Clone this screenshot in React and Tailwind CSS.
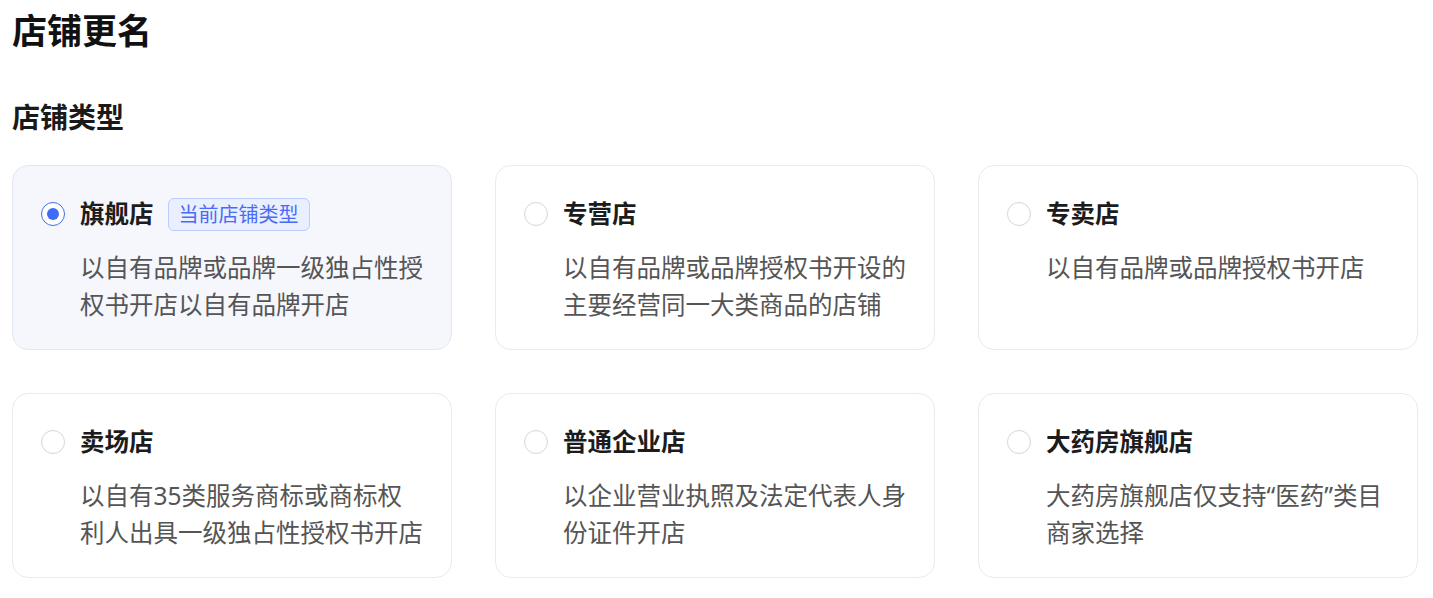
import { useState } from 'react'

const shopTypes = [
  { key: 'flagship', name: '旗舰店', desc: '以自有品牌或品牌一级独占性授权书开店以自有品牌开店', current: true },
  { key: 'specialty', name: '专营店', desc: '以自有品牌或品牌授权书开设的主要经营同一大类商品的店铺' },
  { key: 'exclusive', name: '专卖店', desc: '以自有品牌或品牌授权书开店' },
  { key: 'market', name: '卖场店', desc: '以自有35类服务商标或商标权利人出具一级独占性授权书开店' },
  { key: 'enterprise', name: '普通企业店', desc: '以企业营业执照及法定代表人身份证件开店' },
  { key: 'pharmacy', name: '大药房旗舰店', desc: '大药房旗舰店仅支持“医药”类目商家选择' },
]

function Radio({ checked }) {
  return (
    <span
      className={`flex h-[24px] w-[24px] shrink-0 items-center justify-center rounded-full border bg-white ${
        checked ? 'border-[#3f6cf6]' : 'border-[#d6d6d6]'
      }`}
    >
      {checked && <span className="h-[12px] w-[12px] rounded-full bg-[#3f6cf6]" />}
    </span>
  )
}

export default function App() {
  const [selected, setSelected] = useState('flagship')

  return (
    <div className="min-h-screen bg-white px-[12px] font-['Noto_Sans','Noto_Sans_CJK_SC',sans-serif]">
      <h1 className="pt-[9px] text-[35px] font-bold leading-[44px] text-[#111]">店铺更名</h1>
      <h2 className="mt-[46px] text-[28px] font-bold leading-[36px] text-[#1a1a1a]">店铺类型</h2>

      <div className="mt-[30px] grid w-[1406px] grid-cols-3 gap-[43px]">
        {shopTypes.map((t) => {
          const checked = selected === t.key
          return (
            <div
              key={t.key}
              onClick={() => setSelected(t.key)}
              className={`flex cursor-pointer gap-[15px] rounded-[16px] border pl-[28px] pr-[16px] pt-[31px] pb-[26px] ${
                checked ? 'border-[#e3e7f2] bg-[#f5f7fd]' : 'border-[#ebebeb] bg-white'
              }`}
            >
              <div className="flex h-[34px] items-center">
                <Radio checked={checked} />
              </div>
              <div className="flex-1">
                <div className="flex h-[34px] items-center gap-[14px]">
                  <span className="text-[24.5px] font-bold leading-[34px] text-[#1c1c1c]">{t.name}</span>
                  {t.current && (
                    <span className="rounded-[6px] border border-[#bccdfb] bg-[#e9efff] px-[10px] text-[20px] leading-[31px] text-[#4a6cf4]">
                      当前店铺类型
                    </span>
                  )}
                </div>
                <p className="mt-[18px] max-w-[344px] text-[24.5px] leading-[37px] text-[#555]">{t.desc}</p>
              </div>
            </div>
          )
        })}
      </div>
    </div>
  )
}
